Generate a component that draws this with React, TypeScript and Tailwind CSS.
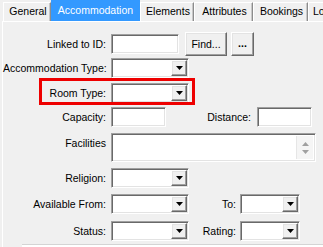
import React from 'react';

const sunken =
  'bg-white border border-t-[#a0a0a0] border-l-[#a0a0a0] border-r-white border-b-white shadow-[inset_1px_1px_0_#696969,inset_-1px_-1px_0_#e3e3e3]';
const raised =
  'bg-[#f0f0f0] border border-t-white border-l-white border-r-[#696969] border-b-[#696969] shadow-[inset_-1px_-1px_0_#a0a0a0,inset_1px_1px_0_#e3e3e3]';

const Caret = () => (
  <svg width="7" height="4" viewBox="0 0 7 4">
    <path d="M0 0h7L3.5 4z" fill="#000" />
  </svg>
);

const Combo = ({ w }: { w: string }) => (
  <div className={`${sunken} ${w} h-[20px] flex justify-end p-[1px]`}>
    <div className={`${raised} w-[16px] h-full flex items-center justify-center`}>
      <Caret />
    </div>
  </div>
);

const Label = ({ children, w = 'w-[104px]' }: { children: React.ReactNode; w?: string }) => (
  <div className={`${w} text-right pr-[1px] shrink-0 whitespace-nowrap`}>{children}</div>
);

const tabs = [
  { name: 'General', w: 'w-[48px]' },
  { name: 'Accommodation', w: 'w-[89px]', active: true },
  { name: 'Elements', w: 'w-[54px]' },
  { name: 'Attributes', w: 'w-[59px]' },
  { name: 'Bookings', w: 'w-[55px]' },
  { name: 'Lo', w: 'w-[40px]', clip: true },
];

export default function App() {
  return (
    <div
      className="relative w-[323px] h-[247px] overflow-hidden bg-[#f0f0f0] text-black text-[10.5px] leading-none"
      style={{ fontFamily: '"Liberation Sans", Arial, sans-serif' }}
    >
      {/* tab strip */}
      <div className="flex items-end h-[21px] pl-[3px]">
        {tabs.map((t) =>
          t.active ? (
            <div
              key={t.name}
              className={`${t.w} h-[21px] shrink-0 bg-[#3399ff] text-white flex items-center justify-center pb-[1px]`}
            >
              {t.name}
            </div>
          ) : (
            <div
              key={t.name}
              className={`${t.w} h-[19px] shrink-0 bg-[#f0f0f0] border-t border-l border-t-white border-l-white border-r border-r-[#8c8c8c] shadow-[inset_-1px_0_0_#c8c8c8] flex items-center ${
                t.clip ? 'justify-start pl-[4px]' : 'justify-center pl-[2px]'
              } pb-[1px] overflow-hidden whitespace-nowrap`}
            >
              {t.name}
            </div>
          )
        )}
      </div>

      {/* panel */}
      <div className="ml-[2px] border-t border-l border-white h-[226px] flex flex-col">
        {/* Linked to ID */}
        <div className="mt-[10px] flex items-center h-[24px]">
          <Label>Linked to ID:</Label>
          <div className={`${sunken} ml-[4px] w-[68px] h-[20px]`} />
          <div className={`${raised} ml-[6px] w-[42px] h-[24px] flex items-center justify-center`}>Find...</div>
          <div className={`${raised} ml-[4px] w-[23px] h-[24px] flex items-center justify-center font-bold pb-[2px]`}>
            ...
          </div>
        </div>

        {/* Accommodation Type */}
        <div className="mt-[2px] flex items-center h-[20px]">
          <Label>Accommodation Type:</Label>
          <div className="ml-[4px]">
            <Combo w="w-[78px]" />
          </div>
        </div>

        {/* Room Type */}
        <div className="mt-[5px] flex items-center h-[20px]">
          <Label>Room Type:</Label>
          <div className="ml-[4px]">
            <Combo w="w-[78px]" />
          </div>
        </div>

        {/* Capacity / Distance */}
        <div className="mt-[4px] flex items-center h-[20px]">
          <Label>Capacity:</Label>
          <div className={`${sunken} ml-[4px] w-[55px] h-[20px]`} />
          <Label w="w-[86px]">Distance:</Label>
          <div className={`${sunken} ml-[5px] w-[55px] h-[20px]`} />
        </div>

        {/* Facilities */}
        <div className="mt-[6px] flex items-start h-[29px]">
          <div className="w-[104px] text-right pr-[1px] pt-[5px]">Facilities</div>
          <div className={`${sunken} ml-[4px] w-[205px] h-[29px] flex justify-end p-[2px]`}>
            <div className="w-[17px] h-full bg-[#f5f5f5] border-l border-[#e6e6e6] flex flex-col items-center justify-center gap-[4px]">
              <svg width="7" height="4" viewBox="0 0 7 4">
                <path d="M0 4h7L3.5 0z" fill="#a0a0a0" />
              </svg>
              <svg width="7" height="4" viewBox="0 0 7 4">
                <path d="M0 0h7L3.5 4z" fill="#a0a0a0" />
              </svg>
            </div>
          </div>
        </div>

        {/* Religion */}
        <div className="mt-[6px] flex items-center h-[20px]">
          <Label>Religion:</Label>
          <div className="ml-[4px]">
            <Combo w="w-[78px]" />
          </div>
        </div>

        {/* Available From / To */}
        <div className="mt-[6px] flex items-center h-[20px]">
          <Label>Available From:</Label>
          <div className="ml-[4px]">
            <Combo w="w-[78px]" />
          </div>
          <Label w="w-[48px]">To:</Label>
          <div className="ml-[3px]">
            <Combo w="w-[60px]" />
          </div>
        </div>

        {/* Status / Rating */}
        <div className="mt-[7px] flex items-center h-[20px]">
          <Label>Status:</Label>
          <div className="ml-[4px]">
            <Combo w="w-[78px]" />
          </div>
          <Label w="w-[48px]">Rating:</Label>
          <div className="ml-[3px]">
            <Combo w="w-[60px]" />
          </div>
        </div>

        <div className="mt-[3px] ml-[19px] flex-1 bg-white border-t border-[#d4d4d4]" />
      </div>

      {/* highlight annotation */}
      <div className="absolute left-[39px] top-[78px] w-[156px] h-[27px] border-[3px] border-[#ee0000] pointer-events-none" />
    </div>
  );
}
